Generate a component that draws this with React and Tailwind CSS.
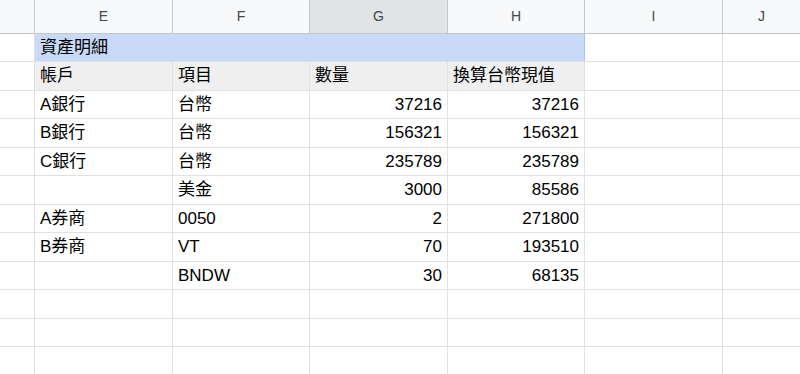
import React from 'react';

const FONT = '"Liberation Sans", Arial, "Noto Sans CJK TC", sans-serif';

// column widths include the right grid line
const COLS = [35, 138, 137, 138, 137, 138];
const LETTERS = ['', 'E', 'F', 'G', 'H', 'I', 'J'];

const ROW_H = [28, 29, 28, 29, 28, 29, 28, 29, 28, 29, 28, 28];

const DATA = [
  ['A銀行', '台幣', '37216', '37216'],
  ['B銀行', '台幣', '156321', '156321'],
  ['C銀行', '台幣', '235789', '235789'],
  ['', '美金', '3000', '85586'],
  ['A券商', '0050', '2', '271800'],
  ['B券商', 'VT', '70', '193510'],
  ['', 'BNDW', '30', '68135'],
];

const Cell = ({ w, className = '', children }) => (
  <div
    className={`shrink-0 flex items-center px-[5px] border-r border-[#e1e1e1] overflow-hidden whitespace-nowrap ${className}`}
    style={w ? { width: w } : undefined}
  >
    {children}
  </div>
);

const EmptyTail = () => (
  <>
    <Cell w={COLS[5]} />
    <Cell className="flex-1 border-r-0" />
  </>
);

const HeaderRow = () => (
  <div className="flex h-[34px] bg-[#f8f9fa] border-b border-[#c4c7c5] text-[14px] text-[#444746]">
    {LETTERS.map((l, i) => (
      <div
        key={i}
        className={`shrink-0 flex items-center justify-center border-r border-[#c4c7c5] ${
          l === 'G' ? 'bg-[#e1e3e5]' : ''
        } ${i === LETTERS.length - 1 ? 'flex-1 border-r-0' : ''}`}
        style={i < COLS.length ? { width: COLS[i] } : undefined}
      >
        {l}
      </div>
    ))}
  </div>
);

const Row = ({ h, children }) => (
  <div className="flex border-b border-[#e1e1e1]" style={{ height: h }}>
    <Cell w={COLS[0]} />
    {children}
  </div>
);

export default function App() {
  const bodyRows = [];

  // merged title row
  bodyRows.push(
    <Row key="title" h={ROW_H[0]}>
      <div
        className="shrink-0 flex items-center px-[5px] bg-[#c9daf8] border-r border-[#a4c2f4]"
        style={{ width: COLS[1] + COLS[2] + COLS[3] + COLS[4] }}
      >
        資產明細
      </div>
      <EmptyTail />
    </Row>
  );

  // column titles
  bodyRows.push(
    <Row key="head" h={ROW_H[1]}>
      <Cell w={COLS[1]} className="bg-[#efefef]">帳戶</Cell>
      <Cell w={COLS[2]} className="bg-[#efefef]">項目</Cell>
      <Cell w={COLS[3]} className="bg-[#efefef]">數量</Cell>
      <Cell w={COLS[4]} className="bg-[#efefef]">換算台幣現值</Cell>
      <EmptyTail />
    </Row>
  );

  DATA.forEach((r, i) => {
    bodyRows.push(
      <Row key={i} h={ROW_H[i + 2]}>
        <Cell w={COLS[1]}>{r[0]}</Cell>
        <Cell w={COLS[2]}>{r[1]}</Cell>
        <Cell w={COLS[3]} className="justify-end">{r[2]}</Cell>
        <Cell w={COLS[4]} className="justify-end">{r[3]}</Cell>
        <EmptyTail />
      </Row>
    );
  });

  for (let i = DATA.length + 2; i < ROW_H.length; i++) {
    bodyRows.push(
      <Row key={`e${i}`} h={ROW_H[i]}>
        <Cell w={COLS[1]} />
        <Cell w={COLS[2]} />
        <Cell w={COLS[3]} />
        <Cell w={COLS[4]} />
        <EmptyTail />
      </Row>
    );
  }

  return (
    <div
      className="w-[800px] h-[374px] overflow-hidden bg-white text-black text-[17px]"
      style={{ fontFamily: FONT }}
    >
      <HeaderRow />
      {bodyRows}
    </div>
  );
}
